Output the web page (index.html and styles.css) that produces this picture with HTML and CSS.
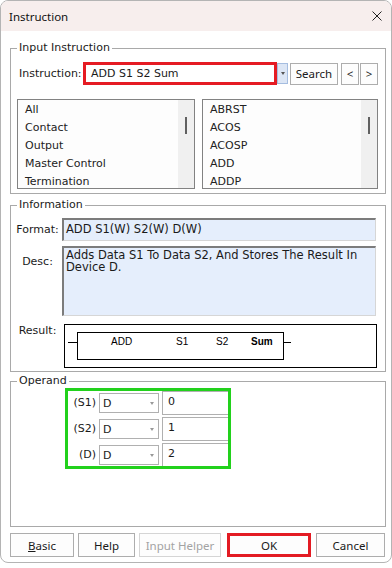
FILE: index.html
```html
<!DOCTYPE html>
<html>
<head>
<meta charset="utf-8">
<link rel="stylesheet" href="styles.css">
</head>
<body>
<div class="window">
  <div class="titlebar">
    <span class="title">Instruction</span>
    <svg class="close" width="10" height="10" viewBox="0 0 10 10"><path d="M0.5 0.5 L9.5 9.5 M9.5 0.5 L0.5 9.5" stroke="#222" stroke-width="1" fill="none"/></svg>
  </div>
  <div class="client">
    <fieldset class="group g1">
      <legend>Input Instruction</legend>
      <div class="g1-body">
        <div class="instr-row">
          <span class="lbl">Instruction:</span>
          <div class="instr-input">ADD S1 S2 Sum</div>
          <div class="dd-btn"><span class="tri"></span></div>
          <div class="btn search">Search</div>
          <div class="btn nav first">&lt;</div>
          <div class="btn nav">&gt;</div>
        </div>
        <div class="lists">
          <div class="listbox">
            <ul class="items">
              <li>All</li>
              <li>Contact</li>
              <li>Output</li>
              <li>Master Control</li>
              <li>Termination</li>
            </ul>
            <div class="vscroll"><span class="thumb"></span></div>
          </div>
          <div class="listbox right">
            <ul class="items">
              <li>ABRST</li>
              <li>ACOS</li>
              <li>ACOSP</li>
              <li>ADD</li>
              <li>ADDP</li>
            </ul>
            <div class="vscroll"><span class="thumb"></span></div>
          </div>
        </div>
      </div>
    </fieldset>

    <fieldset class="group g2">
      <legend>Information</legend>
      <div class="g2-body">
        <span class="flabel mid">Format:</span>
        <div class="field format">ADD S1(W) S2(W) D(W)</div>
        <span class="flabel desc-l">Desc:</span>
        <div class="field desc">Adds Data S1 To Data S2, And Stores The Result In Device D.</div>
        <span class="flabel res-l">Result:</span>
        <div class="result">
          <span class="wire left"></span>
          <div class="ladder">
            <span class="op">ADD</span>
            <span class="op">S1</span>
            <span class="op">S2</span>
            <span class="op bold">Sum</span>
          </div>
          <span class="wire right"></span>
        </div>
      </div>
    </fieldset>

    <fieldset class="group g3">
      <legend>Operand</legend>
      <div class="g3-body">
        <div class="operand">
          <span class="op-label">(S1)</span>
          <div class="op-dd"><span>D</span><span class="tri gray"></span></div>
          <div class="op-val">0</div>
          <span class="op-label">(S2)</span>
          <div class="op-dd"><span>D</span><span class="tri gray"></span></div>
          <div class="op-val">1</div>
          <span class="op-label">(D)</span>
          <div class="op-dd"><span>D</span><span class="tri gray"></span></div>
          <div class="op-val">2</div>
        </div>
      </div>
    </fieldset>

    <div class="buttons">
      <div class="btn b-basic"><span><u>B</u>asic</span></div>
      <div class="btn b-help">Help</div>
      <div class="btn b-helper disabled">Input Helper</div>
      <div class="btn b-ok">OK</div>
      <div class="btn b-cancel">Cancel</div>
    </div>
  </div>
</div>
</body>
</html>
```

FILE: styles.css
```css
body {
  margin: 0;
  background: #ffffff;
}

.window {
  box-sizing: border-box;
  width: 392px;
  height: 563px;
  border: 1px solid #b4b4b4;
  border-radius: 8px;
  overflow: hidden;
  background: #ffffff;
  display: flex;
  flex-direction: column;
}

.titlebar {
  flex: none;
  height: 30px;
  background: #f7eeed;
  display: flex;
  align-items: center;
  justify-content: space-between;
  padding: 0 9px 0 8px;
  font: 11.5px "Noto Sans", sans-serif;
  color: #111;
}

.close {
  display: block;
}

.client {
  flex: 1;
  padding: 0 5px 0 9px;
  display: flex;
  flex-direction: column;
}

.group {
  margin: 0;
  padding: 0;
  border: 1px solid #a9a9a9;
  min-width: 0;
}

.group legend {
  margin-left: 6px;
  padding: 0 2px;
  font: 11px/14px "DejaVu Sans", sans-serif;
  color: #1a1a1a;
}

.g1 {
  margin-top: 10px;
}

.g1-body {
  padding: 7px 7px 4px 6px;
}

.instr-row {
  display: flex;
  align-items: center;
  height: 23px;
}

.lbl {
  width: 64px;
  margin-left: 2px;
  font: 11px "DejaVu Sans", sans-serif;
  color: #1a1a1a;
}

.instr-input {
  box-sizing: border-box;
  width: 194px;
  height: 23px;
  border: 3px solid #e51b23;
  padding-left: 5px;
  font: 11px/17px "DejaVu Sans", sans-serif;
  color: #1a1a1a;
}

.dd-btn {
  box-sizing: border-box;
  width: 11px;
  height: 21px;
  background: #dce6f5;
  border: 1px solid #a5bde0;
  display: flex;
  align-items: center;
  justify-content: center;
}

.tri {
  width: 0;
  height: 0;
  border-left: 2px solid transparent;
  border-right: 2px solid transparent;
  border-top: 3px solid #555;
}

.tri.gray {
  border-top-color: #999;
}

.btn {
  box-sizing: border-box;
  height: 22px;
  border: 1px solid #adadad;
  background: #fdfdfd;
  font: 11.5px "Noto Sans", sans-serif;
  color: #1a1a1a;
  display: flex;
  align-items: center;
  justify-content: center;
}

.search {
  width: 48px;
  margin-left: 2px;
}

.nav {
  width: 18px;
  margin-left: 1px;
}

.nav.first {
  margin-left: 3px;
}

.lists {
  display: flex;
  justify-content: space-between;
  margin-top: 14px;
  height: 90px;
}

.listbox {
  box-sizing: border-box;
  width: 178px;
  border: 1px solid #828282;
  background: #fdfdfd;
  display: flex;
}

.listbox.right {
  width: 176px;
}

.items {
  flex: 1;
  list-style: none;
  margin: 0;
  padding: 1px 0 0 7px;
  font: 11px/18px "DejaVu Sans", sans-serif;
  color: #222;
  overflow: hidden;
}

.vscroll {
  width: 16px;
  background: #f0f0f0;
  display: flex;
  justify-content: center;
  align-items: flex-start;
}

.thumb {
  width: 2px;
  height: 17px;
  margin-top: 17px;
  background: #606060;
}

.g2 {
  margin-top: 4px;
}

.g2-body {
  padding: 6px 8px 3px 2px;
  display: grid;
  grid-template-columns: 49px 1fr;
  row-gap: 5px;
}

.flabel {
  text-align: center;
  font: 11px/14px "DejaVu Sans", sans-serif;
  color: #1a1a1a;
}

.flabel.mid {
  align-self: center;
}

.flabel.desc-l {
  padding-top: 9px;
}

.flabel.res-l {
  margin-top: 3px;
}

.field {
  box-sizing: border-box;
  background: #e5eefc;
  border-style: solid;
  border-width: 2px 1px 1px 2px;
  border-color: #7c7c7c #d6d6d6 #d6d6d6 #7c7c7c;
  font: 11.5px "DejaVu Sans", sans-serif;
  color: #1a1a1a;
  margin-right: 1px;
}

.format {
  height: 23px;
  line-height: 18px;
  padding: 0 2px;
}

.desc {
  height: 70px;
  line-height: 12px;
  padding: 1px 2px;
}

.result {
  box-sizing: border-box;
  height: 44px;
  margin-top: 3px;
  margin-left: 2px;
  border: 1px solid #000;
  background: #fff;
  display: flex;
  align-items: center;
}

.wire {
  height: 1px;
  background: #000;
  align-self: flex-start;
  margin-top: 17px;
}

.wire.left {
  width: 9px;
  margin-left: 3px;
}

.wire.right {
  width: 7px;
}

.ladder {
  box-sizing: border-box;
  width: 207px;
  height: 28px;
  border: 1px solid #000;
  display: grid;
  grid-template-columns: 33px 65px 40px 35px auto;
  align-items: start;
  font: 10px/12px "Liberation Sans", Arial, sans-serif;
  color: #000;
  padding-top: 3px;
}

.ladder .op:first-child {
  grid-column: 2;
}

.bold {
  font-weight: bold;
}

.g3 {
  margin-top: 2px;
}

.g3-body {
  padding: 0 0 57px 54px;
}

.operand {
  box-sizing: border-box;
  width: 166px;
  height: 81px;
  border: 3px solid #22d11c;
  display: grid;
  grid-template-columns: 28px 60px 1fr;
  column-gap: 3px;
  row-gap: 2px;
  grid-auto-rows: 24px;
  overflow: hidden;
}

.op-label {
  text-align: right;
  align-self: center;
  font: 11px/14px "DejaVu Sans", sans-serif;
  color: #1a1a1a;
}

.op-dd {
  box-sizing: border-box;
  height: 20px;
  margin-top: 2px;
  border: 1px solid #b0b0b0;
  background: #fff;
  display: flex;
  justify-content: space-between;
  align-items: center;
  padding: 0 4px 0 3px;
  font: 11px "DejaVu Sans", sans-serif;
  color: #1a1a1a;
}

.op-val {
  box-sizing: border-box;
  border: 1px solid #b0b0b0;
  border-right: none;
  background: #fff;
  padding-left: 5px;
  font: 11px/20px "DejaVu Sans", sans-serif;
  color: #1a1a1a;
}

.buttons {
  display: flex;
  margin-top: 6px;
}

.buttons .btn {
  height: 24px;
}

.b-basic {
  width: 64px;
}

.b-help {
  width: 57px;
  margin-left: 4px;
}

.b-helper {
  width: 82px;
  margin-left: 4px;
}

.disabled {
  color: #a3a3a3;
  border-color: #d5d5d5;
}

.b-ok {
  width: 84px;
  margin-left: 6px;
  border: 3px solid #e31b23 !important;
}

.b-cancel {
  width: 69px;
  margin-left: 5px;
}
```
